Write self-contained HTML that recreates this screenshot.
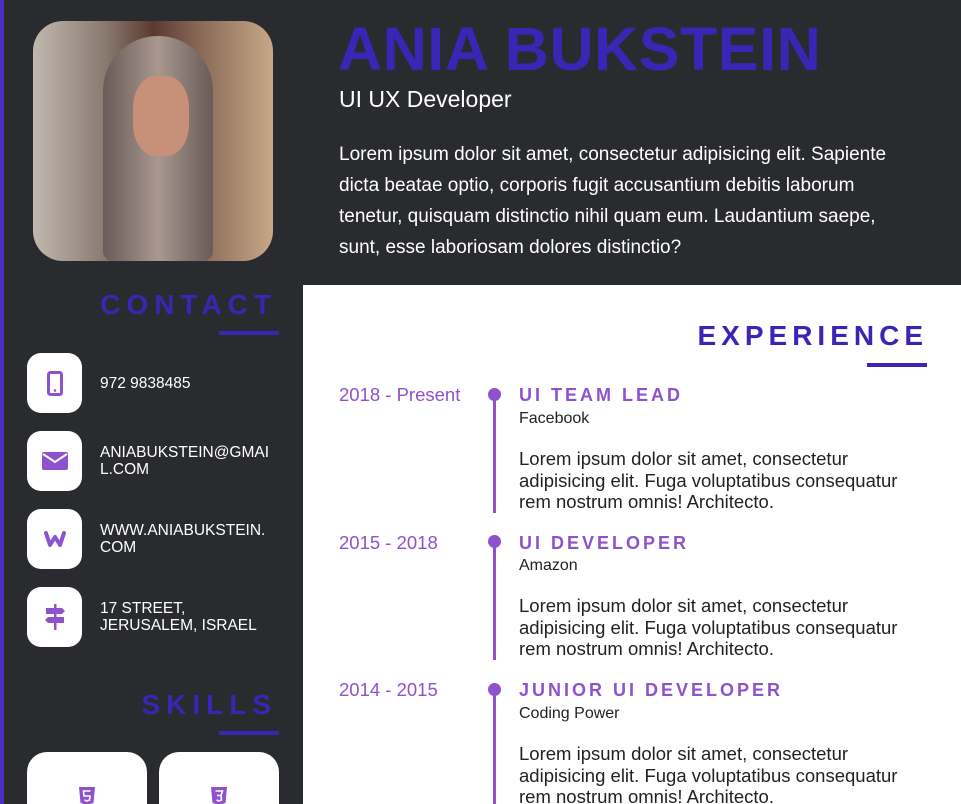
<!DOCTYPE html>
<html><head><style>
*{margin:0;padding:0;box-sizing:border-box}
html,body{width:961px;height:804px;overflow:hidden}
body{background:#2a2b2f;font-family:"Liberation Sans",Arial,sans-serif;position:relative}
.a{position:absolute}
.bar{left:0;top:0;width:4px;height:804px;background:#4a2fc0}
.photo{left:33px;top:21px;width:240px;height:240px;border-radius:30px;overflow:hidden;background:linear-gradient(90deg,#c0b8b0 0%,#8a7a70 30%,#5a3a30 50%,#8a6a58 70%,#c8a888 100%)}
.role{left:339px;top:86px;color:#fff;font-size:23px}
.intro{left:339px;top:139px;width:580px;color:#fff;font-size:19px;line-height:31px}
.white{left:303px;top:285px;width:658px;height:519px;background:#fff}
.sh{color:#3b25b5;font-weight:bold;font-size:28px;letter-spacing:6px;text-align:right}
.ul{height:4px;background:#3b25b5;width:60px}
.ic{width:55px;height:60px;background:#fff;border-radius:14px;display:flex;align-items:center;justify-content:center}
.ct{color:#fff;font-size:15.5px;line-height:17px;width:172px;word-break:break-all}
.date{color:#8e52cc;font-size:18.5px}
.tl{left:493px;width:3px;background:#8e52cc}
.dot{left:488px;width:13px;height:13px;border-radius:50%;background:#8e52cc}
.jt{color:#8e52cc;font-weight:bold;font-size:18px;letter-spacing:3px}
.co{color:#222;font-size:16px}
.d{color:#222;font-size:18.5px;line-height:21.5px;width:400px}
.sk{width:120px;height:80px;background:#fff;border-radius:20px;top:752px}
</style></head><body>
<div class="a bar"></div>
<div class="a photo">
<div class="a" style="left:70px;top:15px;width:110px;height:225px;border-radius:55px 55px 10px 10px;background:linear-gradient(90deg,#6a5a58,#a89890,#6a5a58)"></div>
<div class="a" style="left:100px;top:55px;width:56px;height:80px;border-radius:40%;background:#c89078"></div>
</div>
<div class="a" style="left:338px;top:16px;font-size:61px;font-weight:bold;color:#3b25b5;line-height:66px;letter-spacing:0.6px">ANIA BUKSTEIN</div>
<div class="a role">UI UX Developer</div>
<div class="a intro">Lorem ipsum dolor sit amet, consectetur adipisicing elit. Sapiente dicta beatae optio, corporis fugit accusantium debitis laborum tenetur, quisquam distinctio nihil quam eum. Laudantium saepe, sunt, esse laboriosam dolores distinctio?</div>
<div class="a white"></div>

<div class="a sh" style="left:57px;width:220px;top:289px">CONTACT</div>
<div class="a ul" style="left:219px;top:331px"></div>

<div class="a ic" style="left:27px;top:353px"><svg width="16" height="25" viewBox="0 0 16 25"><rect x="1.5" y="1.5" width="13" height="22" rx="2" fill="none" stroke="#8e52cc" stroke-width="3"/><circle cx="8" cy="19.5" r="1.3" fill="#8e52cc"/></svg></div>
<div class="a ct" style="left:100px;top:375px">972 9838485</div>
<div class="a ic" style="left:27px;top:431px"><svg width="26" height="18" viewBox="0 0 26 18"><rect width="26" height="18" rx="2" fill="#8e52cc"/><path d="M1 2 L13 10 L25 2" fill="none" stroke="#fff" stroke-width="2"/></svg></div>
<div class="a ct" style="left:100px;top:444px">ANIABUKSTEIN@GMAIL.COM</div>
<div class="a ic" style="left:27px;top:509px"><svg width="24" height="18" viewBox="0 0 24 18"><path d="M3 3 L7 15 L12 7 L17 15 L21 3" fill="none" stroke="#8e52cc" stroke-width="4" stroke-linejoin="round" stroke-linecap="round"/></svg></div>
<div class="a ct" style="left:100px;top:522px">WWW.ANIABUKSTEIN.COM</div>
<div class="a ic" style="left:27px;top:587px"><svg width="24" height="26" viewBox="0 0 24 26"><rect x="11" y="0" width="2.5" height="26" fill="#8e52cc"/><path d="M3 4 H19 L22 7 L19 10 H3Z" fill="#8e52cc"/><path d="M21 13 H5 L2 16 L5 19 H21Z" fill="#8e52cc"/></svg></div>
<div class="a ct" style="left:100px;top:600px">17 STREET,<br>JERUSALEM, ISRAEL</div>

<div class="a sh" style="left:57px;width:220px;top:689px">SKILLS</div>
<div class="a ul" style="left:219px;top:731px"></div>
<div class="a sk" style="left:27px"><svg class="a" style="left:51px;top:35px" width="18" height="18" viewBox="0 0 18 18"><path d="M1 0H17L15.5 16L9 18L2.5 16Z" fill="#8e52cc"/><path d="M12.5 4H5.5L6 9H12L11.5 13L9 14L6.5 13" fill="none" stroke="#fff" stroke-width="1.6"/></svg></div>
<div class="a sk" style="left:159px"><svg class="a" style="left:51px;top:35px" width="18" height="18" viewBox="0 0 18 18"><path d="M1 0H17L15.5 16L9 18L2.5 16Z" fill="#8e52cc"/><path d="M5.5 4H12.5L11 8.5H7 M11 8.5L11.5 13L9 14L6.5 13" fill="none" stroke="#fff" stroke-width="1.6"/></svg></div>

<div class="a sh" style="left:600px;width:328px;top:320px;font-size:28px;letter-spacing:5px">EXPERIENCE</div>
<div class="a ul" style="left:867px;top:363px;height:4px"></div>

<div class="a tl" style="top:395px;height:118px"></div>
<div class="a tl" style="top:542px;height:118px"></div>
<div class="a tl" style="top:690px;height:114px"></div>
<div class="a dot" style="top:388px"></div>
<div class="a dot" style="top:535px"></div>
<div class="a dot" style="top:683px"></div>

<div class="a date" style="left:339px;top:384px">2018 - Present</div>
<div class="a jt" style="left:519px;top:385px">UI TEAM LEAD</div>
<div class="a co" style="left:519px;top:410px">Facebook</div>
<div class="a d" style="left:519px;top:448px">Lorem ipsum dolor sit amet, consectetur adipisicing elit. Fuga voluptatibus consequatur rem nostrum omnis! Architecto.</div>

<div class="a date" style="left:339px;top:532px">2015 - 2018</div>
<div class="a jt" style="left:519px;top:533px">UI DEVELOPER</div>
<div class="a co" style="left:519px;top:557px">Amazon</div>
<div class="a d" style="left:519px;top:595px">Lorem ipsum dolor sit amet, consectetur adipisicing elit. Fuga voluptatibus consequatur rem nostrum omnis! Architecto.</div>

<div class="a date" style="left:339px;top:679px">2014 - 2015</div>
<div class="a jt" style="left:519px;top:680px">JUNIOR UI DEVELOPER</div>
<div class="a co" style="left:519px;top:705px">Coding Power</div>
<div class="a d" style="left:519px;top:743px">Lorem ipsum dolor sit amet, consectetur adipisicing elit. Fuga voluptatibus consequatur rem nostrum omnis! Architecto.</div>
</body></html>
